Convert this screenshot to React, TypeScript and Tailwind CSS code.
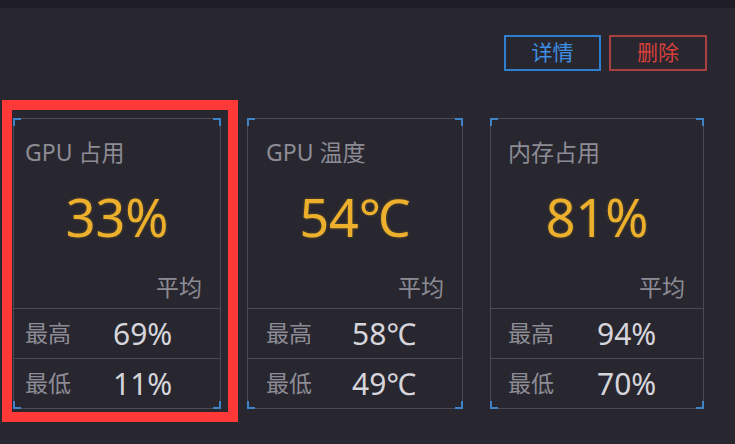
import React from "react";

type Card = {
  title: string;
  avg: string;
  max: string;
  min: string;
  width: string;
  pl: string;
  labelW: string;
};

const cards: Card[] = [
  { title: "GPU 占用", avg: "33%", max: "69%", min: "11%", width: "w-[208px]", pl: "pl-[11px]", labelW: "w-[88px]" },
  { title: "GPU 温度", avg: "54℃", max: "58℃", min: "49℃", width: "w-[216px]", pl: "pl-[18px]", labelW: "w-[86px]" },
  { title: "内存占用", avg: "81%", max: "94%", min: "70%", width: "w-[214px]", pl: "pl-[17px]", labelW: "w-[89px]" },
];

const font = { fontFamily: '"Noto Sans", "Noto Sans CJK SC", sans-serif' };

function Corners() {
  return (
    <>
      <span className="absolute -left-px -top-px h-[8px] w-[8px] border-l-2 border-t-2 border-[#3f82c8]" />
      <span className="absolute -right-px -top-px h-[8px] w-[8px] border-r-2 border-t-2 border-[#3f82c8]" />
      <span className="absolute -left-px -bottom-px h-[8px] w-[8px] border-l-2 border-b-2 border-[#3f82c8]" />
      <span className="absolute -right-px -bottom-px h-[8px] w-[8px] border-r-2 border-b-2 border-[#3f82c8]" />
    </>
  );
}

function StatCard({ c }: { c: Card }) {
  return (
    <div className={`relative ${c.width} h-[291px] border border-[#4a4955] flex flex-col`}>
      <Corners />
      <div className="h-[189px] flex flex-col">
        <div className={`${c.pl} pt-[18px] h-[47px] text-[23px] leading-[30px] text-[#8d8c95]`}>{c.title}</div>
        <div className="h-[106px] flex items-center justify-center text-[52px] leading-[60px] text-[#ecb02c] pb-[4px]" style={{ textShadow: "0 0 3px rgba(236,176,44,0.35)" }}>
          {c.avg}
        </div>
        <div className="flex justify-end pr-[18px] text-[23px] leading-[30px] text-[#8d8c95]">平均</div>
      </div>
      <div className={`h-[50px] border-t border-[#4a4955] flex items-center ${c.pl}`}>
        <span className={`${c.labelW} text-[23px] text-[#8d8c95]`}>最高</span>
        <span className="text-[30px] text-[#d6d5db]">{c.max}</span>
      </div>
      <div className={`h-[50px] border-t border-[#4a4955] flex items-center ${c.pl}`}>
        <span className={`${c.labelW} text-[23px] text-[#8d8c95]`}>最低</span>
        <span className="text-[30px] text-[#d6d5db]">{c.min}</span>
      </div>
    </div>
  );
}

export default function App() {
  return (
    <div className="relative w-[735px] h-[444px] overflow-hidden bg-[#28272f]" style={font}>
      <div className="h-[8px] bg-[#1f1e27]" />
      <div className="flex justify-end gap-[8px] pr-[28px] pt-[27px]">
        <button className="w-[97px] h-[36px] border-2 border-[#2f7fd0] text-[#3d8fe4] text-[21px] flex items-center justify-center">详情</button>
        <button className="w-[98px] h-[36px] border-2 border-[#a8403f] text-[#d8403c] text-[21px] flex items-center justify-center">删除</button>
      </div>
      <div className="flex pl-[13px] pt-[47px]">
        <StatCard c={cards[0]} />
        <div className="w-[26px]" />
        <StatCard c={cards[1]} />
        <div className="w-[27px]" />
        <StatCard c={cards[2]} />
      </div>
      <div className="absolute left-[2px] top-[100px] w-[236px] h-[322px] border-[10px] border-[#ff3838] pointer-events-none" />
    </div>
  );
}
